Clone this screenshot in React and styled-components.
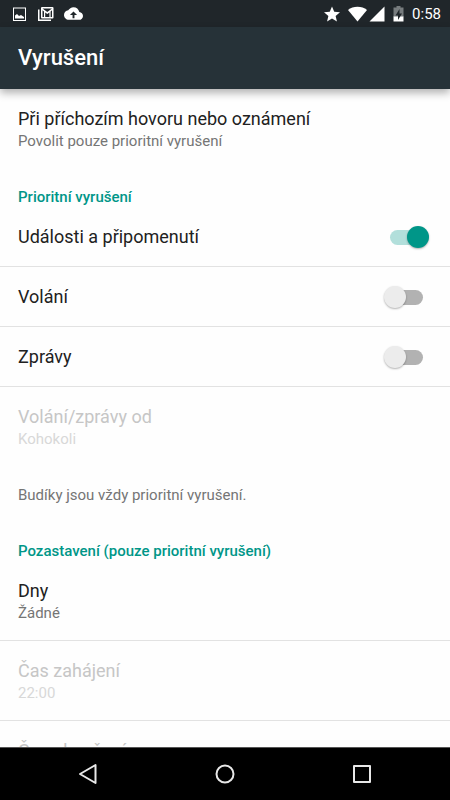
import React, { useState } from 'react';
import styled, { createGlobalStyle } from 'styled-components';

const GlobalStyle = createGlobalStyle`
  *, *::before, *::after {
    box-sizing: border-box;
  }
  body {
    margin: 0;
    background-color: #fefefe;
    font-family: Roboto, 'Noto Sans', sans-serif;
  }
`;

const Screen = styled.div`
  display: flex;
  flex-direction: column;
  height: 100vh;
`;

const StatusBar = styled.div`
  display: flex;
  justify-content: space-between;
  align-items: center;
  height: 27px;
  padding: 0 9px 0 12px;
  background-color: #20262a;
  color: #fff;
  font-size: 15px;
  font-weight: 400;
`;

const StatusGroup = styled.div`
  display: flex;
  align-items: center;
  gap: ${({ $gap }) => $gap}px;
`;

const StatusIcon = styled.svg`
  display: block;
  width: ${({ $width }) => $width}px;
  height: ${({ $height }) => $height || 16}px;
  fill: #fff;
`;

const AppBar = styled.header`
  position: relative;
  display: flex;
  align-items: center;
  height: 62px;
  padding: 0 18px;
  background-color: #263238;
  box-shadow: 0 4px 8px rgba(0, 0, 0, 0.3);
`;

const Title = styled.h1`
  margin: 0;
  color: #fff;
  font-size: 22px;
  font-weight: 500;
  line-height: 28px;
`;

const Content = styled.main`
  flex: 1;
  min-height: 0;
  overflow-y: auto;
  scrollbar-width: none;
`;

const SectionTitle = styled.h2`
  margin: 0;
  padding: 18px 18px 0;
  height: 38px;
  color: #009688;
  font-size: 15px;
  font-weight: 500;
  line-height: 20px;
`;

const Preference = styled.button`
  display: block;
  width: 100%;
  min-height: 80px;
  padding: 18px 18px 17px;
  border: 0;
  border-bottom: 1px solid ${({ $divider }) => ($divider ? '#e2e2e2' : 'transparent')};
  background: none;
  font-family: inherit;
  text-align: left;
  color: #212121;
  &:disabled {
    color: #c6c6c6;
  }
`;

const Name = styled.span`
  display: block;
  font-size: 18px;
  line-height: 24px;
`;

const Summary = styled.span`
  display: block;
  font-size: 15px;
  line-height: 20px;
  color: #757575;
  ${Preference}:disabled & {
    color: #d8d8d8;
  }
`;

const SwitchRow = styled.label`
  display: flex;
  justify-content: space-between;
  align-items: center;
  min-height: 60px;
  padding: 0 21px 0 18px;
  border-bottom: 1px solid #e2e2e2;
  color: #212121;
`;

const Switch = styled.input`
  appearance: none;
  position: relative;
  width: 45px;
  height: 22px;
  margin: 0;
  &::before {
    content: '';
    position: absolute;
    top: 4px;
    left: 6px;
    width: 33px;
    height: 15px;
    border-radius: 8px;
    background-color: #b2b2b2;
  }
  &::after {
    content: '';
    position: absolute;
    top: 0;
    left: 0;
    width: 22px;
    height: 22px;
    border-radius: 50%;
    background-color: #ececec;
    box-shadow: 0 1px 2px rgba(0, 0, 0, 0.3);
  }
  &:checked::before {
    background-color: #b2dfdb;
  }
  &:checked::after {
    left: 23px;
    background-color: #009688;
  }
`;

const Note = styled.p`
  margin: 0;
  padding: 18px 18px;
  color: #757575;
  font-size: 15px;
  line-height: 20px;
`;

const NavBar = styled.nav`
  display: flex;
  height: 53px;
  padding: 0 20px;
  border-top: 1px solid #555;
  background-color: #000;
`;

const NavButton = styled.button`
  display: flex;
  flex: 1;
  justify-content: center;
  align-items: center;
  padding: 0;
  border: 0;
  background: none;
  svg {
    fill: none;
    stroke: #e8e8e8;
    stroke-width: 2;
    stroke-linejoin: round;
  }
`;

const SwitchPreference = ({ id, name, initial }) => {
  const [checked, setChecked] = useState(initial);

  return (
    <SwitchRow htmlFor={id}>
      <Name>{name}</Name>
      <Switch
        type="checkbox"
        id={id}
        checked={checked}
        onChange={() => setChecked(!checked)}
      />
    </SwitchRow>
  );
};

const TextPreference = ({ name, summary, disabled, divider }) => (
  <Preference type="button" disabled={disabled} $divider={divider}>
    <Name>{name}</Name>
    <Summary>{summary}</Summary>
  </Preference>
);

const Notifications = () => (
  <StatusGroup $gap={10}>
    <StatusIcon $width={15} viewBox="0 0 15 16">
      <path d="M1 1.500h13v13.500H1zM2 2.500v11.500h11V2.500z" fillRule="evenodd" />
      <path d="M3 12.500V9.500l2-1.500 2 2 2-1 3 2v1.500z" />
    </StatusIcon>
    <StatusIcon $width={17} viewBox="0 0 17 16">
      <path d="M1 3.500v11.500h13v-1.500H2.500v-10z" />
      <path
        d="M5 1h10.500q1 0 1 1v9.500q0 1-1 1H5q-1 0-1-1V2q0-1 1-1zM5.500 2.500l4.800 3.500L15 2.500zM5.500 4.300V11H7V5.500zM8.200 6.500V11h4.200V6.500l-2.100 1.600zM13.600 5.500V11H15V4.300z"
        fillRule="evenodd"
      />
    </StatusIcon>
    <StatusIcon $width={19} $height={19} viewBox="0 0 24 24">
      <path
        d="M19.350 10.040C18.670 6.590 15.640 4 12 4 9.110 4 6.600 5.640 5.350 8.040 2.340 8.360 0 10.910 0 14c0 3.310 2.690 6 6 6h13c2.760 0 5-2.240 5-5 0-2.640-2.050-4.780-4.650-4.960zM13.200 14v4h-2.400v-4H7.500L12 9.500l4.500 4.500z"
        fillRule="evenodd"
      />
    </StatusIcon>
  </StatusGroup>
);

const SystemIcons = () => (
  <StatusGroup $gap={8}>
    <StatusIcon $width={16} viewBox="2 2 20 19">
      <path d="M12 17.270L18.180 21l-1.640-7.030L22 9.240l-7.190-.61L12 2 9.190 8.630 2 9.240l5.460 4.730L5.820 21z" />
    </StatusIcon>
    <StatusGroup $gap={2}>
      <StatusIcon $width={19} viewBox="0 0 19 16">
        <path d="M9.500 15.500L0 4Q4 .7 9.500.7T19 4z" />
      </StatusIcon>
      <StatusIcon $width={16} viewBox="0 0 16 16">
        <path d="M.5 15.500L15.500.5v15z" />
      </StatusIcon>
    </StatusGroup>
    <StatusIcon $width={11} viewBox="0 0 11 16">
      <path d="M3.500 0h4v1.500h3V11H.5V1.500h3z" fill="#777c7e" />
      <path d="M.5 10.500h10v5H.5z" />
      <path d="M6.500 3L2.500 9.500H5V14l4-6.500H6.500z" fill="#20262a" />
    </StatusIcon>
    <span>0:58</span>
  </StatusGroup>
);

const App = () => (
  <>
    <GlobalStyle />
    <Screen>
      <StatusBar>
        <Notifications />
        <SystemIcons />
      </StatusBar>
      <AppBar>
        <Title>Vyrušení</Title>
      </AppBar>
      <Content>
        <TextPreference
          name="Při příchozím hovoru nebo oznámení"
          summary="Povolit pouze prioritní vyrušení"
        />
        <SectionTitle>Prioritní vyrušení</SectionTitle>
        <SwitchPreference id="events" name="Události a připomenutí" initial />
        <SwitchPreference id="calls" name="Volání" initial={false} />
        <SwitchPreference id="messages" name="Zprávy" initial={false} />
        <TextPreference name="Volání/zprávy od" summary="Kohokoli" disabled />
        <Note>Budíky jsou vždy prioritní vyrušení.</Note>
        <SectionTitle>Pozastavení (pouze prioritní vyrušení)</SectionTitle>
        <TextPreference name="Dny" summary="Žádné" divider />
        <TextPreference name="Čas zahájení" summary="22:00" disabled divider />
        <TextPreference name="Čas ukončení" summary="7:00" disabled divider />
      </Content>
      <NavBar>
        <NavButton type="button" aria-label="Zpět">
          <svg width="20" height="22" viewBox="0 0 20 22">
            <path d="M17.500 2v18L2 11z" />
          </svg>
        </NavButton>
        <NavButton type="button" aria-label="Domů">
          <svg width="20" height="20" viewBox="0 0 20 20">
            <circle cx="10" cy="10" r="8.500" />
          </svg>
        </NavButton>
        <NavButton type="button" aria-label="Poslední aplikace">
          <svg width="18" height="18" viewBox="0 0 18 18">
            <path d="M1 1h16v16H1z" />
          </svg>
        </NavButton>
      </NavBar>
    </Screen>
  </>
);

export default App;
